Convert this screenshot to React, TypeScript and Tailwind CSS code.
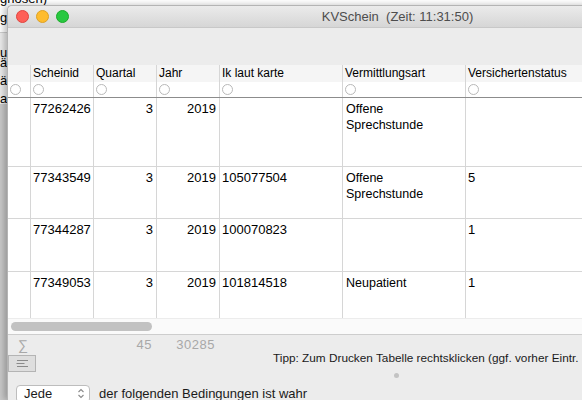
import React from 'react';

const font = { fontFamily: '"Liberation Sans", Arial, sans-serif' };

const cols = ['w-[23px]', 'w-[63px]', 'w-[63px]', 'w-[63px]', 'w-[123px]', 'w-[123px]', 'flex-1'];
const headers = ['', 'Scheinid', 'Quartal', 'Jahr', 'Ik laut karte', 'Vermittlungsart', 'Versichertenstatus'];

type Row = { id: string; q: string; j: string; ik: string; verm: string[]; vs: string; h: string };

const rows: Row[] = [
  { id: '77262426', q: '3', j: '2019', ik: '', verm: ['Offene', 'Sprechstunde'], vs: '', h: 'h-[69px]' },
  { id: '77343549', q: '3', j: '2019', ik: '105077504', verm: ['Offene', 'Sprechstunde'], vs: '5', h: 'h-[52px]' },
  { id: '77344287', q: '3', j: '2019', ik: '100070823', verm: [], vs: '1', h: 'h-[53px]' },
  { id: '77349053', q: '3', j: '2019', ik: '101814518', verm: ['Neupatient'], vs: '1', h: 'h-[46px]' },
];

function Radio() {
  return <span className="block h-[11px] w-[11px] rounded-full border border-[#b9b9b9] bg-white" />;
}

export default function App() {
  return (
    <div className="relative h-[400px] w-[582px] overflow-hidden bg-white text-black" style={font}>
      {/* window behind */}
      <div className="absolute inset-0 flex flex-col">
        <div className="h-[32px] shrink-0 bg-white" />
        <div className="h-[72px] shrink-0 border-t border-[#cfcfcf] bg-[#ececec]" />
        <div className="flex-1 bg-[#c9c9c9]" />
      </div>
      <div className="absolute left-0 top-[-9px] text-[13px] leading-[16px]">gnosen)</div>
      <div className="absolute left-0 top-[10px] text-[13px] leading-[16px]">g</div>
      <div className="absolute left-0 top-[48px] text-[13px] leading-[10px]">ur</div>
      <div className="absolute left-0 top-[58px] text-[13px] leading-[10px]">ä</div>
      <div className="absolute left-0 top-[76px] text-[13px] leading-[10px]">äl</div>
      <div className="absolute left-0 top-[94px] text-[13px] leading-[10px]">a</div>

      {/* front window */}
      <div className="absolute left-[7px] top-[5px] bottom-0 flex w-[780px] flex-col rounded-t-[5px] border-l border-t border-[#b4b4b4] bg-[#ececec] shadow-[-3px_0_6px_rgba(0,0,0,0.25)]">
        <div className="relative flex h-[22px] shrink-0 items-center rounded-t-[5px] border-b border-[#c8c8c8] bg-gradient-to-b from-[#ebebeb] to-[#d6d6d6]">
          <div className="flex items-center gap-[7px] pl-[8px]">
            <span className="h-[13px] w-[13px] rounded-full border border-[#e0443e] bg-[#fe5f57]" />
            <span className="h-[13px] w-[13px] rounded-full border border-[#dea123] bg-[#febc2e]" />
            <span className="h-[13px] w-[13px] rounded-full border border-[#1aab29] bg-[#28c840]" />
          </div>
          <div className="absolute inset-0 flex items-center justify-center text-[13px] text-[#4d4d4d]">
            KVSchein&nbsp;&nbsp;(Zeit: 11:31:50)
          </div>
        </div>
        <div className="h-[37px] shrink-0 bg-[#ececec]" />

        {/* table */}
        <div className="flex shrink-0 flex-col bg-white">
          <div className="flex h-[17px] bg-[#f5f5f5] text-[12px] leading-[17px]">
            {headers.map((h, i) => (
              <div key={i} className={`${cols[i]} shrink-0 border-r border-[#d6d6d6] pl-[2px] ${i === 6 ? 'border-r-0' : ''}`}>
                {h}
              </div>
            ))}
          </div>
          <div className="flex h-[16px] border-b border-[#8c8c8c] bg-white">
            {headers.map((_, i) => (
              <div key={i} className={`${cols[i]} shrink-0 border-r border-[#d6d6d6] pl-[2px] pt-[2px] ${i === 6 ? 'border-r-0' : ''}`}>
                <Radio />
              </div>
            ))}
          </div>
          {rows.map((r, ri) => (
            <div key={ri} className={`flex ${r.h} ${ri < 3 ? 'border-b border-[#d6d6d6]' : ''} text-[13px] leading-[16px]`}>
              <div className={`${cols[0]} shrink-0 border-r border-[#d6d6d6]`} />
              <div className={`${cols[1]} shrink-0 border-r border-[#d6d6d6] pl-[2px] pt-[3px]`}>{r.id}</div>
              <div className={`${cols[2]} shrink-0 border-r border-[#d6d6d6] pr-[3px] pt-[3px] text-right`}>{r.q}</div>
              <div className={`${cols[3]} shrink-0 border-r border-[#d6d6d6] pr-[3px] pt-[3px] text-right`}>{r.j}</div>
              <div className={`${cols[4]} shrink-0 border-r border-[#d6d6d6] pl-[2px] pt-[3px]`}>{r.ik}</div>
              <div className={`${cols[5]} shrink-0 border-r border-[#d6d6d6] pl-[3px] pt-[3px] text-[12.5px]`}>
                {r.verm.map((v) => (
                  <div key={v}>{v}</div>
                ))}
              </div>
              <div className={`${cols[6]} pl-[2px] pt-[3px]`}>{r.vs}</div>
            </div>
          ))}
          <div className="flex h-[17px] items-center border-b border-t border-[#cdcdcd] border-t-[#ececec] bg-[#fafafa] pl-[3px]">
            <div className="h-[9px] w-[141px] rounded-full bg-[#c2c2c2]" />
          </div>
        </div>

        {/* footer */}
        <div className="relative flex-1 bg-[#ececec] text-[13px]">
          <div className="flex h-[20px] items-center text-[#a8a8a8]">
            <div className="w-[23px] pl-[10px] text-[14px]">∑</div>
            <div className="w-[63px]" />
            <div className="w-[63px] pr-[5px] text-right tracking-[0.5px]">45</div>
            <div className="w-[63px] pr-[5px] text-right tracking-[0.5px]">30285</div>
          </div>
          <div className="flex h-[17px] w-[28px] flex-col items-center justify-center gap-[2px] border border-[#b4b4b4] bg-[#dedede]">
            <span className="block h-[1px] w-[11px] bg-[#8a8a8a]" />
            <span className="block h-[1px] w-[8px] -translate-x-[1.5px] bg-[#8a8a8a]" />
            <span className="block h-[1px] w-[11px] bg-[#8a8a8a]" />
          </div>
          <div className="absolute left-[265px] top-[15px] whitespace-nowrap text-[11.8px] text-[#1a1a1a]">
            Tipp: Zum Drucken Tabelle rechtsklicken (ggf. vorher Eintr.
          </div>
          <div className="absolute left-[386px] top-[38px] h-[5px] w-[5px] rounded-full bg-[#c3c3c3]" />
          <div className="mt-[12px] flex items-center gap-[9px] pl-[8px]">
            <div className="flex h-[18px] w-[74px] items-center justify-between rounded-[4px] border border-[#bdbdbd] bg-white pl-[7px] pr-[4px] text-[13px] text-[#1a1a1a]">
              <span>Jede</span>
              <svg width="8" height="11" viewBox="0 0 8 11" fill="none" stroke="#8a8a8a" strokeWidth="1.1">
                <path d="M1.5 4 L4 1.5 L6.5 4" />
                <path d="M1.5 7 L4 9.5 L6.5 7" />
              </svg>
            </div>
            <span className="text-[13px] text-[#1a1a1a]">der folgenden Bedingungen ist wahr</span>
          </div>
        </div>
      </div>
    </div>
  );
}
